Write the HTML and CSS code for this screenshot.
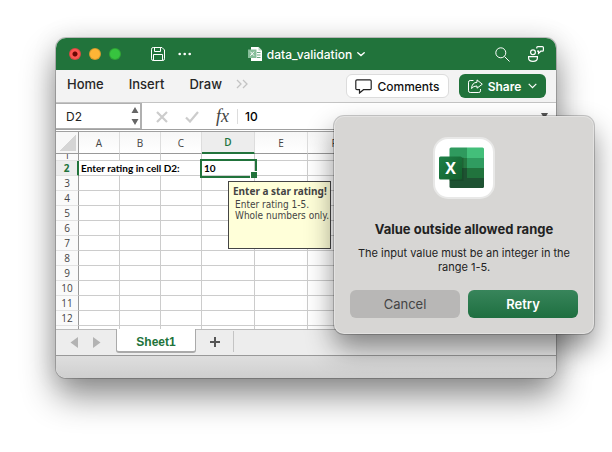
FILE: index.html
```html
<!DOCTYPE html>
<html lang="en">
<head>
<meta charset="utf-8">
<title>data_validation</title>
<link rel="stylesheet" href="styles.css">
</head>
<body>
<main class="window">
  <header class="titlebar">
    <div class="title-left">
      <button class="light red" aria-label="Close"></button>
      <button class="light amber" aria-label="Minimize"></button>
      <button class="light green" aria-label="Zoom"></button>
      <button class="tool save" aria-label="Save"><svg width="14" height="14" viewBox="0 0 14 14" fill="none" stroke="#fff"><path d="M.5 2.2Q.5.5 2.2.5H11l2.500 2.500v8.800q0 1.700-1.700 1.700H2.200Q.5 13.500.5 11.800zM3.500.5v4h6v-4M2.500 13.500v-6h9v6"/></svg></button>
      <button class="tool" aria-label="More"><svg width="14" height="14" viewBox="0 0 14 14" fill="#fff"><circle cx="1.700" cy="7" r="1.300"/><circle cx="6.700" cy="7" r="1.300"/><circle cx="11.700" cy="7" r="1.300"/></svg></button>
    </div>
    <div class="doc">
      <svg width="14" height="14" viewBox="0 0 14 14"><path d="M3 0h7.500L14 3.500V14H3z" fill="#fff"/><path d="M10.500 0v3.500H14" fill="#b9d8c5"/><path d="M9 5.500h3.500M9 8h3.500M9 10.500h3.500" stroke="#67a57f"/><rect y="2.500" width="8.500" height="8.500" fill="#86bd99"/><path d="M2.400 4.700l3.600 4M6 4.700l-3.600 4" stroke="#fff"/></svg>
      <span>data_validation</span>
      <svg width="8" height="5" viewBox="0 0 8 5" fill="none" stroke="#fff" stroke-width="1.400" stroke-linecap="round"><path d="M.8.8L4 3.500 7.200.8"/></svg>
    </div>
    <div class="title-right">
      <button class="tool" aria-label="Search"><svg width="15" height="15" viewBox="0 0 15 15" fill="none" stroke="#fff"><circle cx="5.800" cy="5.800" r="5"/><path d="M9.500 9.500l5 5"/></svg></button>
      <button class="tool" aria-label="Presence"><svg width="16" height="16" viewBox="0 0 16 16" fill="none" stroke="#fff" stroke-width="1.200"><circle cx="5" cy="6.200" r="2.400"/><path d="M.6 10.600h8.800v1.400q0 3.400-4.400 3.400T.6 12zM8.800 2.600V1.600q0-1 1-1h4.600q1 0 1 1V4.200q0 1-1 1h-1.600l-2.300 2.200V5.200H9"/></svg></button>
    </div>
  </header>

  <nav class="ribbon">
    <a href="#home">Home</a>
    <a href="#insert">Insert</a>
    <a href="#draw">Draw</a>
    <button class="more" aria-label="More tabs"><svg width="12" height="10" viewBox="0 0 12 10" fill="none" stroke="#c3c3c3" stroke-width="1.300"><path d="M1 1l4 4-4 4M7 1l4 4-4 4"/></svg></button>
    <button class="pill comments"><svg width="17" height="15" viewBox="0 0 17 15" fill="none" stroke="#222" stroke-width="1.200"><path d="M2 .8h13q1.200 0 1.200 1.200v7.500q0 1.200-1.200 1.200H8.500L4.500 14v-3.300H2Q.8 10.700.8 9.500V2Q.8.8 2 .8z"/></svg>Comments</button>
    <button class="pill share"><svg width="15" height="14" viewBox="0 0 15 14" fill="none" stroke="#fff"><path d="M5.500 1.500H2.200Q.5 1.500.5 3.200v8.600q0 1.700 1.700 1.700h8.600q1.700 0 1.700-1.700V10"/><path d="M9 .9l5.300 4.300L9 9.200V7Q5.500 6.800 3.500 9.500 4 3.500 9 3.300z" stroke-linejoin="round"/></svg>Share<svg class="caret" width="9" height="6" viewBox="0 0 9 6" fill="none" stroke="#fff" stroke-width="1.200"><path d="M.7.8l3.800 3.800L8.300.8"/></svg></button>
  </nav>

  <div class="formula-bar">
    <div class="name-box">
      <input aria-label="Name box" value="D2">
      <svg width="8" height="18" viewBox="0 0 8 18" fill="#666"><path d="M4 0l3.500 6h-7zM4 18l3.500-6h-7z"/></svg>
    </div>
    <svg class="cross" width="12" height="12" viewBox="0 0 12 12" fill="none" stroke="#ccc" stroke-width="2.200"><path d="M1 1l10 10M11 1L1 11"/></svg>
    <svg class="check" width="14" height="12" viewBox="0 0 14 12" fill="none" stroke="#ccc" stroke-width="2.200"><path d="M1 6.500l4 4L13 1"/></svg>
    <span class="fx">fx</span>
    <input class="formula" aria-label="Formula" value="10">
    <svg class="expand" width="7" height="6" viewBox="0 0 7 6" fill="#555"><path d="M0 0h7L3.500 6z"/></svg>
  </div>

  <section class="sheet">
    <table>
      <colgroup><col class="gutter"><col class="narrow"><col class="narrow"><col class="narrow"><col class="wide"><col class="wide"><col class="wide"><col class="wide"><col class="wide"><col></colgroup>
      <thead><tr><th class="corner"></th><th>A</th><th>B</th><th>C</th><th class="current">D</th><th>E</th><th>F</th><th>G</th><th>H</th><th>I</th></tr></thead>
      <tbody>
        <tr class="partial-top"><th><div>1</div></th><td></td><td></td><td></td><td></td><td></td><td></td><td></td><td></td><td></td></tr>
        <tr><th class="current">2</th><td colspan="3">Enter rating in cell D2:</td><td class="selected">10
          <div class="hint" role="tooltip"><strong>Enter a star rating!</strong><p>Enter rating 1-5.<br>Whole numbers only.</p></div></td><td></td><td></td><td></td><td></td><td></td></tr>
        <tr><th>3</th><td></td><td></td><td></td><td></td><td></td><td></td><td></td><td></td><td></td></tr>
        <tr><th>4</th><td></td><td></td><td></td><td></td><td></td><td></td><td></td><td></td><td></td></tr>
        <tr><th>5</th><td></td><td></td><td></td><td></td><td></td><td></td><td></td><td></td><td></td></tr>
        <tr><th>6</th><td></td><td></td><td></td><td></td><td></td><td></td><td></td><td></td><td></td></tr>
        <tr><th>7</th><td></td><td></td><td></td><td></td><td></td><td></td><td></td><td></td><td></td></tr>
        <tr><th>8</th><td></td><td></td><td></td><td></td><td></td><td></td><td></td><td></td><td></td></tr>
        <tr><th>9</th><td></td><td></td><td></td><td></td><td></td><td></td><td></td><td></td><td></td></tr>
        <tr><th>10</th><td></td><td></td><td></td><td></td><td></td><td></td><td></td><td></td><td></td></tr>
        <tr><th>11</th><td></td><td></td><td></td><td></td><td></td><td></td><td></td><td></td><td></td></tr>
        <tr><th>12</th><td></td><td></td><td></td><td></td><td></td><td></td><td></td><td></td><td></td></tr>
        <tr class="partial-end"><th></th><td></td><td></td><td></td><td></td><td></td><td></td><td></td><td></td><td></td></tr>
      </tbody>
    </table>
  </section>

  <div class="tabs">
    <button aria-label="Previous sheet"><svg width="8" height="11" viewBox="0 0 8 11" fill="#b3b3b3"><path d="M8 0v11L.5 5.500z"/></svg></button>
    <button aria-label="Next sheet"><svg width="8" height="11" viewBox="0 0 8 11" fill="#b3b3b3"><path d="M0 0v11l7.500-5.500z"/></svg></button>
    <button class="tab">Sheet1</button>
    <button class="add" aria-label="Add sheet"><svg width="10" height="10" viewBox="0 0 10 10" stroke="#555" stroke-width="2"><path d="M5 0v10M0 5h10"/></svg></button>
  </div>
  <footer class="status"></footer>
</main>

<section class="dialog" role="alertdialog" aria-labelledby="dialog-title" aria-describedby="dialog-text">
  <svg class="app-icon" width="62" height="62" viewBox="0 0 62 62">
    <defs>
      <clipPath id="book"><rect x="16.500" y="10.500" width="34.500" height="40.500" rx="1.500"/></clipPath>
      <linearGradient id="badge" x1="0" y1="0" x2="1" y2="1"><stop offset="0" stop-color="#1e8048"/><stop offset="1" stop-color="#135f2b"/></linearGradient>
    </defs>
    <rect x="1" y="1" width="60" height="60" rx="14" fill="#fff" stroke="#e8e8e7" stroke-width="2"/>
    <g clip-path="url(#book)">
      <path d="M16 10h18v11H16z" fill="#2f9a5e"/><path d="M34 10h18v11H34z" fill="#43bf7a"/>
      <path d="M16 21h18v10H16z" fill="#257841"/><path d="M34 21h18v10H34z" fill="#309c60"/>
      <path d="M16 31h18v10H16z" fill="#1e5232"/><path d="M34 31h18v10H34z" fill="#21733d"/>
      <path d="M16 41h36v11H16z" fill="#1e5232"/>
      <path d="M16 20.500h14.500v23.500H16z" fill="#113b20" opacity=".35"/>
    </g>
    <rect x="6" y="19.500" width="23" height="23" rx="1.500" fill="url(#badge)"/>
    <text class="app-letter" x="17.500" y="37" text-anchor="middle">X</text>
  </svg>
  <h1 id="dialog-title">Value outside allowed range</h1>
  <p id="dialog-text">The input value must be an integer in the range 1-5.</p>
  <div class="actions"><button class="cancel">Cancel</button><button class="retry">Retry</button></div>
</section>
</body>
</html>
```
FILE: styles.css
```css
* { box-sizing: border-box; }
body {
  margin: 0;
  padding: 38px 56px;
  min-height: 100vh;
  position: relative;
  overflow: hidden;
  background: #fff;
  font-family: Inter, "Liberation Sans", sans-serif;
  color: #222;
}
button, input { font: inherit; color: inherit; border: 0; padding: 0; background: none; min-width: 0; }
button { display: flex; align-items: center; justify-content: center; }
svg { display: block; flex: none; }

.window {
  border-radius: 10px;
  overflow: hidden;
  background: #fff;
  box-shadow: 0 0 0 1px rgba(0, 0, 0, .2), 0 18px 34px rgba(0, 0, 0, .45), 0 0 26px rgba(0, 0, 0, .1);
}

.titlebar {
  display: grid;
  grid-template-columns: 1fr auto 1fr;
  align-items: center;
  height: 32px;
  padding: 0 12px 0 13px;
  background: #21733b;
  color: #fff;
}
.title-left, .title-right, .doc { display: flex; align-items: center; }
.title-left { gap: 8px; }
.light { width: 12px; height: 12px; border-radius: 50%; border: 1px solid rgba(0, 0, 0, .15); }
.red { background: radial-gradient(circle, #6b0805 2px, #fc5650 3px); }
.amber { background: #fdb536; }
.green { background: #37c43f; }
.save { margin: 0 5px 0 22px; }
.doc { gap: 5px; font-size: 12px; font-weight: 500; }
.title-right { justify-content: flex-end; gap: 18px; }

.ribbon {
  display: flex;
  align-items: center;
  height: 33px;
  padding: 0 10px 0 11px;
  background: #f3f3f3;
  border-bottom: 1px solid #c4c4c4;
  font-size: 13px;
  font-weight: 500;
}
.ribbon a { color: #262626; text-decoration: none; margin: 0 25px 4px 0; }
.ribbon .more { margin: 0 auto 4px -11px; }
.pill { height: 24px; border-radius: 6px; font-size: 12px; }
.comments { gap: 5px; width: 103px; background: #fff; border: 1px solid #dcdcdc; color: #111; }
.share { gap: 5px; width: 87px; margin-left: 10px; background: #21733b; color: #fff; font-weight: 600; }
.caret { margin-left: 2px; }

.formula-bar {
  display: flex;
  align-items: center;
  height: 29px;
  background: #fff;
  border-bottom: 3px double #a0a0a0;
  font-size: 12px;
}
.name-box {
  display: flex;
  align-items: center;
  width: 86px;
  height: 26px;
  padding: 0 1px 0 10px;
  border: 1px solid #b0b0b0;
  border-width: 1px 2px 1px 0;
}
.name-box input { flex: 1; }
.cross { margin: 2px 17px 0 14px; }
.check { margin: 2px 17px 0 0; }
.fx { font: italic 18px/20px "Liberation Serif", serif; color: #444; width: 21px; }
.formula { flex: 1; padding-left: 7px; border-left: 1px solid #ddd; color: #000; font-weight: 500; }
.expand { margin-right: 8px; }

.sheet { height: 197px; overflow: hidden; font-family: "Open Sans", sans-serif; }
table { width: 100%; table-layout: fixed; border-collapse: separate; border-spacing: 0; font-size: 10px; }
.gutter { width: 23px; }
.narrow { width: 41px; }
.wide { width: 53px; }
th, td { height: 15px; padding: 0; line-height: 14px; border: 0 solid #ccc; border-width: 0 1px 1px 0; }
th { font-weight: 500; color: #444; background: #fafafa; text-align: center; }
tbody th { border-right-color: #999; border-bottom-color: #e2e2e2; }
thead th { height: 22px; border-bottom-color: #999; border-right-color: #ddd; background: linear-gradient(#f7f7f7, #fff); }
thead .corner { background: linear-gradient(135deg, #f7f7f7 50%, #d5d5d5 50%) 4px 3px / 16px 16px no-repeat #f7f7f7; border-right-color: #999; }
thead .current { background: #ededed; border-bottom: 2px solid #21733b; color: #21733b; font-weight: 600; }
tbody .current { background: #ededed; border-right: 2px solid #21733b; color: #21733b; font-weight: 700; }
.partial-top th, .partial-top td { height: 7px; line-height: 0; }
.partial-top div { display: flex; align-items: flex-end; justify-content: center; height: 6px; overflow: hidden; line-height: 9px; }
.partial-end th, .partial-end td { border-bottom: 0; }
tbody td { color: #000; white-space: nowrap; padding-left: 2px; font: 700 10px/14px Lato, sans-serif; }
.selected { position: relative; outline: 2px solid #21733b; }
.selected::after { content: ""; position: absolute; right: -3px; bottom: -3px; width: 6px; height: 6px; background: #21733b; border: solid #fff; border-width: 1px 0 0 1px; }
.hint {
  position: absolute;
  left: 26px;
  top: 20px;
  width: 103px;
  height: 68px;
  padding: 4px;
  background: #ffffd9;
  border: 1px solid #444;
  color: #444;
  font: 10px/11px "DejaVu Sans Condensed", "DejaVu Sans", sans-serif;
}
.hint strong { font-family: "Noto Sans", sans-serif; }
.hint p { margin: 2px 0 0 2px; }

.tabs { display: flex; align-items: stretch; height: 26px; background: #ededed; border-top: 1px solid #bbb; }
.tabs button { width: 8px; margin-left: 15px; }
.tabs button:first-child { margin-left: 14px; }
.tabs .tab {
  width: 80px;
  height: 24px;
  margin-top: -1px;
  padding-top: 3px;
  background: #fff;
  border: 1px solid #aaa;
  border-width: 0 1px 2px;
  border-radius: 0 0 3px 3px;
  color: #21733b;
  font: bold 12px "Liberation Sans", sans-serif;
}
.tabs .add { width: 38px; height: 21px; margin: 1px 0 0; border-right: 1px solid #c4c4c4; }
.status { height: 23px; background: linear-gradient(#dedede, #cfcfcf); border-top: 1px solid #999; }

.dialog {
  position: absolute;
  top: 116px;
  right: 18px;
  width: 260px;
  padding: 21px 16px 16px;
  border-radius: 10px;
  background: #d7d6d4;
  box-shadow: 0 0 0 1px rgba(0, 0, 0, .2), inset 0 0 0 1px rgba(255, 255, 255, .3), 0 14px 28px rgba(0, 0, 0, .45);
  text-align: center;
}
.app-icon { margin: 0 auto 22px; }
.app-letter { font: bold 16px "Open Sans", sans-serif; fill: #fff; }
h1 { margin: 0 0 9px; font-size: 13px; line-height: 16px; font-weight: 700; }
.dialog p { margin: 0 0 16px; font-size: 11px; line-height: 14px; }
.actions { display: grid; grid-template-columns: 1fr 1fr; gap: 8px; }
.actions button { height: 28px; border-radius: 6px; font-size: 13px; }
.cancel { background: #b8b7b6; color: #444; }
.retry { background: linear-gradient(#38855b, #1e6f40); color: #fff; font-weight: 600; }
```
